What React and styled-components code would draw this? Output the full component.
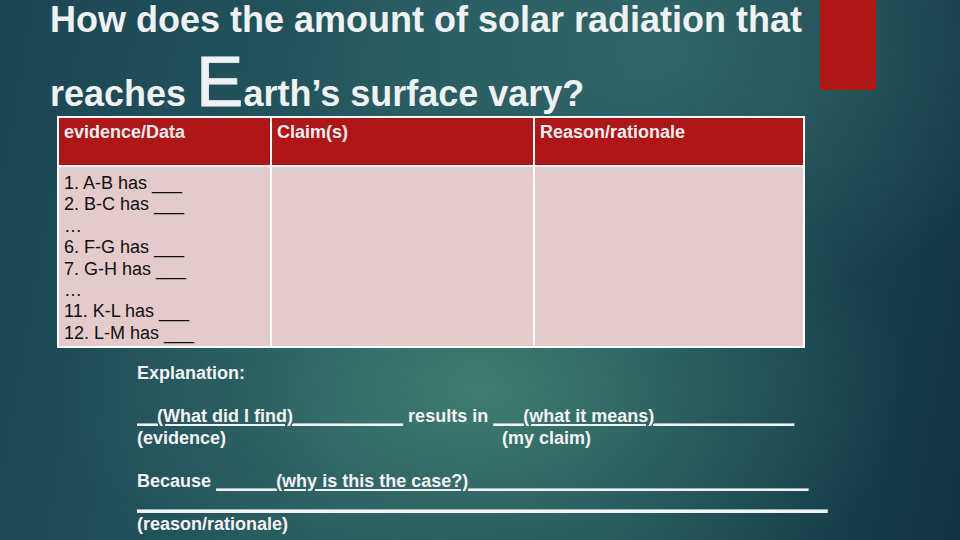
import React from 'react'
import styled, { createGlobalStyle } from 'styled-components'

const Global = createGlobalStyle`
  html, body {
    margin: 0;
    padding: 0;
  }
  body {
    font-family: "Liberation Sans", Arial, sans-serif;
  }
`

const Slide = styled.div`
  width: 960px;
  height: 540px;
  overflow: hidden;
  background:
    radial-gradient(ellipse 420px 260px at 50% 72%, rgba(72, 138, 118, 0.75) 0%, rgba(60, 120, 110, 0.35) 55%, rgba(40, 100, 100, 0) 100%),
    radial-gradient(ellipse 380px 260px at 70% 10%, rgba(62, 120, 118, 0.55) 0%, rgba(40, 100, 100, 0) 100%),
    linear-gradient(100deg, #1a4652 0%, #25595e 40%, #215459 62%, #113643 100%);
  color: #eef2f3;
`

const Header = styled.header`
  display: flex;
  align-items: flex-start;
  padding-left: 50px;
`

const Title = styled.h1`
  width: 770px;
  margin: 0;
  padding-top: 2px;
  font-size: 36px;
  font-weight: bold;
`

const TitleLine = styled.div`
  line-height: 36px;
  white-space: nowrap;
`

const TitleLineBig = styled(TitleLine)`
  margin-top: 14px;
`

const BigLetter = styled.span`
  font-size: 71px;
  line-height: 60px;
  font-weight: normal;
  -webkit-text-stroke: 0.8px #eef2f3;
`

const Accent = styled.div`
  width: 56px;
  height: 90px;
  background: #b11616;
`

const Table = styled.div`
  display: grid;
  grid-template-columns: 211px 261px 268px;
  grid-template-rows: 47px 179px;
  gap: 2px;
  padding: 2px;
  width: 744px;
  margin: 4px 0 0 57px;
  background: #ffffff;
  box-sizing: content-box;
`

const HeadCell = styled.div`
  background: #b11616;
  color: #f4f0f0;
  font-size: 18px;
  font-weight: bold;
  line-height: 21px;
  padding: 4px 0 0 5px;
`

const BodyCell = styled.div`
  background: #e3cbcc;
  color: #111;
  font-size: 18px;
  line-height: 21.4px;
  padding: 6px 0 0 5px;
`

const Line = styled.div`
  white-space: pre;
`

const Explain = styled.section`
  margin: 15px 0 0 137px;
  font-size: 18px;
  font-weight: bold;
  line-height: 21.5px;
  color: #f1f4f4;
`

const Row = styled.div`
  display: flex;
  white-space: pre;
  min-height: 21.5px;
`

const Col = styled.span`
  width: ${p => p.w}px;
  flex: none;
`

const Blank = styled.span`
  text-decoration: underline;
  text-decoration-thickness: ${p => (p.thick ? 3 : 2)}px;
  text-underline-offset: 2px;
`

const evidence = [
  '1. A-B has ___',
  '2. B-C has ___',
  '…',
  '6. F-G has ___',
  '7. G-H has ___',
  '…',
  '11. K-L has ___',
  '12. L-M has ___',
]

export default function App() {
  return (
    <Slide>
      <Global />
      <Header>
        <Title>
          <TitleLine>How does the amount of solar radiation that</TitleLine>
          <TitleLineBig>
            reaches <BigLetter>E</BigLetter>arth’s surface vary?
          </TitleLineBig>
        </Title>
        <Accent />
      </Header>

      <Table>
        <HeadCell>evidence/Data</HeadCell>
        <HeadCell>Claim(s)</HeadCell>
        <HeadCell>Reason/rationale</HeadCell>
        <BodyCell>
          {evidence.map((e, i) => <Line key={i}>{e}</Line>)}
        </BodyCell>
        <BodyCell />
        <BodyCell />
      </Table>

      <Explain>
        <Row>Explanation:</Row>
        <Row />
        <Row>
          <Blank>{'__(What did I find)___________'}</Blank>
          {' results in '}
          <Blank>{'___(what it means)______________'}</Blank>
        </Row>
        <Row>
          <Col w={365}>(evidence)</Col>
          <span>(my claim)</span>
        </Row>
        <Row />
        <Row>
          {'Because '}
          <Blank>{'______(why is this the case?)__________________________________'}</Blank>
        </Row>
        <Row>
          <Blank thick>{'_____________________________________________________________________'}</Blank>
        </Row>
        <Row>(reason/rationale)</Row>
      </Explain>
    </Slide>
  )
}
